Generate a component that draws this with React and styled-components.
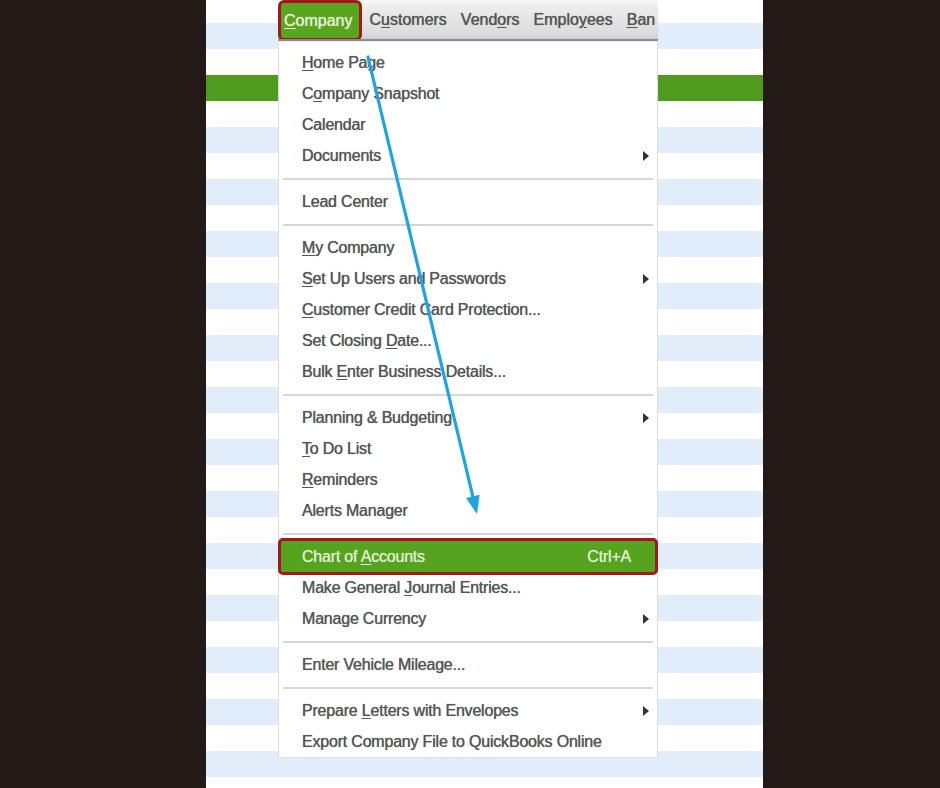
import React from "react";
import styled, { createGlobalStyle } from "styled-components";

const Global = createGlobalStyle`
  html, body { margin: 0; padding: 0; background: #231a17; }
  body { font-family: "Liberation Sans", Arial, sans-serif; }
`;

const Page = styled.div`
  width: 940px;
  height: 788px;
  display: flex;
  background: #231a17;
  overflow: hidden;
`;

const Side = styled.div`
  flex: 0 0 ${(p) => p.$w}px;
  background: #231a17;
`;

const Panel = styled.div`
  position: relative;
  flex: 0 0 557px;
  height: 788px;
  overflow: hidden;
  display: flex;
  flex-direction: column;
  background: #ffffff;
`;

const Stripe = styled.div`
  flex: 0 0 ${(p) => p.$h}px;
  background: ${(p) =>
    p.$kind === "blue" ? "#e2edfc" : p.$kind === "green" ? "#4f9b1d" : "#ffffff"};
`;

const MenuBar = styled.div`
  position: absolute;
  top: 0;
  left: 72px;
  width: 380px;
  height: 41px;
  box-sizing: border-box;
  display: flex;
  align-items: stretch;
  background: linear-gradient(#f7f7f7 0%, #ececec 20%, #dcdcdc 85%, #d0d0d0 100%);
  border-bottom: 2px solid #8c8c8c;
  overflow: hidden;
  white-space: nowrap;
`;

const MenuTitle = styled.div`
  display: flex;
  align-items: center;
  padding: ${(p) => (p.$active ? "0 7px 0 3px" : "0 7px")};
  font-size: 16px;
  color: ${(p) => (p.$active ? "#e3f1d3" : "#555555")};
  background: ${(p) => (p.$active ? "#5aa520" : "transparent")};
  border: ${(p) => (p.$active ? "3px solid #a3191b" : "none")};
  border-radius: ${(p) => (p.$active ? "6px" : "0")};
  margin-bottom: ${(p) => (p.$active ? "-2px" : "0")};
  text-shadow: 0 0 0.8px currentColor;
`;

const Key = styled.span`
  text-decoration: underline;
  text-underline-offset: 2px;
`;

const Dropdown = styled.div`
  position: absolute;
  top: 42px;
  left: 72px;
  width: 380px;
  box-sizing: border-box;
  padding-top: 5px;
  background: #ffffff;
  border: 1px solid #dedede;
  border-top: none;
  display: flex;
  flex-direction: column;
`;

const Item = styled.div`
  position: relative;
  height: 31px;
  display: flex;
  align-items: center;
  justify-content: space-between;
  padding: 0 27px 0 23px;
  font-size: 16px;
  letter-spacing: -0.2px;
  color: #555555;
  text-shadow: 0 0 0.8px rgba(80, 80, 80, 0.9);
  white-space: nowrap;
`;

const HighlightItem = styled(Item)`
  height: 37px;
  box-sizing: border-box;
  margin: -3px -1px;
  padding: 0 24px 0 21px;
  background: #55a31e;
  border: 3px solid #a3191b;
  border-radius: 5px;
  color: #e6f3d8;
  text-shadow: 0 0 0.8px rgba(230, 243, 216, 0.7);
`;

const SubArrow = styled.span`
  position: absolute;
  right: 8px;
  top: 50%;
  margin-top: -5px;
  width: 0;
  height: 0;
  border-top: 5px solid transparent;
  border-bottom: 5px solid transparent;
  border-left: 6px solid #333333;
`;

const Separator = styled.div`
  height: 15px;
  display: flex;
  align-items: center;
  padding: 0 4px;
  &::after {
    content: "";
    flex: 1;
    height: 2px;
    background: #d6d6d6;
  }
`;

const Overlay = styled.svg`
  position: absolute;
  left: 0;
  top: 0;
  width: 940px;
  height: 788px;
  pointer-events: none;
`;

const K = ({ children }) => <Key>{children}</Key>;

const groups = [
  [
    { t: <><K>H</K>ome Page</> },
    { t: <>C<K>o</K>mpany Snapshot</> },
    { t: <>Calendar</> },
    { t: <>Documents</>, sub: true },
  ],
  [{ t: <>Lead Center</> }],
  [
    { t: <><K>M</K>y Company</> },
    { t: <><K>S</K>et Up Users and Passwords</>, sub: true },
    { t: <><K>C</K>ustomer Credit Card Protection...</> },
    { t: <>Set Closing <K>D</K>ate...</> },
    { t: <>Bulk <K>E</K>nter Business Details...</> },
  ],
  [
    { t: <>Plannin<K>g</K> &amp; Budgeting</>, sub: true },
    { t: <><K>T</K>o Do List</> },
    { t: <><K>R</K>eminders</> },
    { t: <>Alerts Manager</> },
  ],
  [
    { t: <>Chart of <K>A</K>ccounts</>, hl: true, sc: "Ctrl+A" },
    { t: <>Make General <K>J</K>ournal Entries...</> },
    { t: <>Manage Currency</>, sub: true },
  ],
  [{ t: <>Enter Vehicle Mileage...</> }],
  [
    { t: <>Prepare <K>L</K>etters with Envelopes</>, sub: true },
    { t: <>Export Company File to QuickBooks Online</> },
  ],
];

function buildStripes() {
  const rows = [{ h: 23, k: "white" }];
  for (let i = 0; i < 31; i++) {
    let k = i % 2 === 0 ? "blue" : "white";
    if (i === 2) k = "green";
    rows.push({ h: 26, k });
  }
  return rows;
}

export default function App() {
  const stripes = buildStripes();
  const x1 = 368, y1 = 57, tx = 477, ty = 514;
  const dx = tx - x1, dy = ty - y1;
  const len = Math.hypot(dx, dy);
  const ux = dx / len, uy = dy / len;
  const bx = tx - ux * 18, by = ty - uy * 18;
  const px = -uy * 7, py = ux * 7;
  return (
    <>
      <Global />
      <Page>
        <Side $w={206} />
        <Panel>
          {stripes.map((s, i) => (
            <Stripe key={i} $h={s.h} $kind={s.k} />
          ))}
          <MenuBar>
            <MenuTitle $active><K>C</K>ompany</MenuTitle>
            <MenuTitle>C<K>u</K>stomers</MenuTitle>
            <MenuTitle>Vend<K>o</K>rs</MenuTitle>
            <MenuTitle>Emplo<K>y</K>ees</MenuTitle>
            <MenuTitle><K>B</K>an</MenuTitle>
          </MenuBar>
          <Dropdown>
            {groups.map((g, gi) => (
              <React.Fragment key={gi}>
                {gi > 0 && <Separator />}
                {g.map((it, ii) =>
                  it.hl ? (
                    <HighlightItem key={ii}>
                      <span>{it.t}</span>
                      <span>{it.sc}</span>
                    </HighlightItem>
                  ) : (
                    <Item key={ii}>
                      <span>{it.t}</span>
                      {it.sub && <SubArrow />}
                    </Item>
                  )
                )}
              </React.Fragment>
            ))}
          </Dropdown>
        </Panel>
        <Side $w={177} />
        <Overlay viewBox="0 0 940 788">
          <line
            x1={x1}
            y1={y1}
            x2={bx + ux * 2}
            y2={by + uy * 2}
            stroke="#1ea4e0"
            strokeWidth="3.2"
            strokeLinecap="round"
          />
          <polygon
            points={`${tx},${ty} ${bx + px},${by + py} ${bx - px},${by - py}`}
            fill="#1ea4e0"
          />
        </Overlay>
      </Page>
    </>
  );
}
